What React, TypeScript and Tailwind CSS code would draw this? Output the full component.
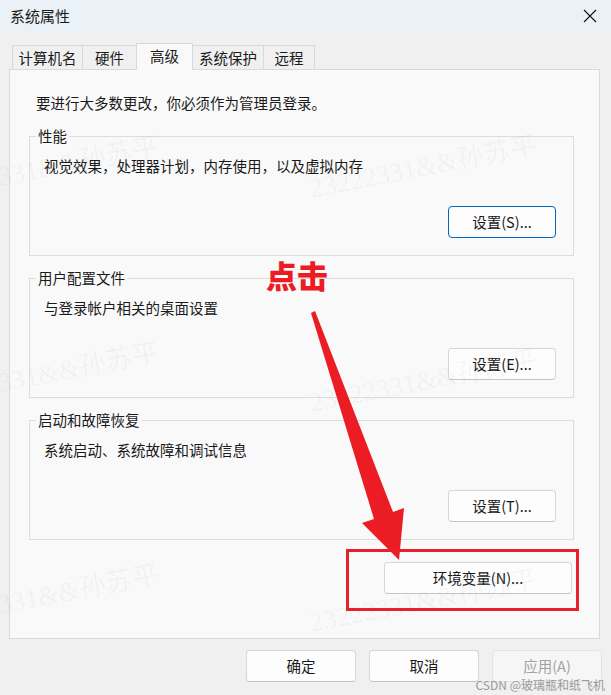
import clsx from "clsx";
import type { ReactNode } from "react";

const tabs = [
  { label: "计算机名", width: "w-[71px]" },
  { label: "硬件", width: "w-[55px]" },
  { label: "高级", width: "w-[57px]", active: true },
  { label: "系统保护", width: "w-[72px]" },
  { label: "远程", width: "w-[52px]" },
];

function WinButton({
  children,
  className,
  primary = false,
  disabled = false,
}: {
  children: ReactNode;
  className?: string;
  primary?: boolean;
  disabled?: boolean;
}) {
  return (
    <button
      className={clsx(
        "h-[32px] rounded-[4px] border text-[14.5px] leading-[20px]",
        primary && "border-[#0067c0] bg-[#fdfdfd]",
        !primary && !disabled && "border-[#d6d6d6] border-b-[#c4c4c4] bg-[#fdfdfd]",
        disabled && "border-[#e3e3e3] bg-[#f6f6f6] text-[#a2a2a2]",
        className
      )}>
      {children}
    </button>
  );
}

function Group({
  title,
  desc,
  button,
  primary,
  className,
  descTop = "pt-[11px]",
}: {
  title: string;
  desc: string;
  button: string;
  primary?: boolean;
  className?: string;
  descTop?: string;
}) {
  return (
    <fieldset className={clsx("border border-[#dcdcdc]", className)}>
      <legend className="ml-[6px] px-[2px] leading-[20px]">{title}</legend>
      <div className={clsx("flex flex-col pl-[14px] pr-[17px] pb-[17px]", descTop)}>
        <p className="leading-[20px]">{desc}</p>
        <div className="mt-[30px] flex justify-end">
          <WinButton primary={primary} className="w-[108px]">
            {button}
          </WinButton>
        </div>
      </div>
    </fieldset>
  );
}

export default function App() {
  return (
    <div className="relative h-[695px] w-[611px] overflow-hidden bg-[#f0f0f0] font-['Noto_Sans_CJK_SC','Microsoft_YaHei',sans-serif] text-[14.5px] text-[#1a1a1a]">
      {/* title bar */}
      <div className="flex h-[32px] items-center justify-between bg-[#eaf2f7] pl-[10px] pr-[14px]">
        <span className="text-[15px] leading-[20px]">系统属性</span>
        <svg width="14" height="14" viewBox="0 0 14 14" className="mt-[-1px]">
          <path d="M1 1 L13 13 M13 1 L1 13" stroke="#111" strokeWidth="1.1" />
        </svg>
      </div>

      {/* tabs */}
      <div className="relative z-10 mt-[11px] flex items-end pl-[12px]">
        {tabs.map((t, i) => (
          <div
            key={t.label}
            className={clsx(
              "flex items-center justify-center border border-b-0 border-[#d9d9d9] leading-[20px]",
              t.width,
              i > 0 && "-ml-px",
              t.active ? "relative z-10 -mb-px h-[27px] bg-[#f9f9f9] pb-[2px]" : "h-[24px] bg-[#f0f0f0]"
            )}>
            {t.label}
          </div>
        ))}
      </div>

      {/* panel */}
      <div className="ml-[9px] h-[570px] w-[591px] border border-[#dadada] bg-[#f9f9f9] pl-[19px] pr-[25px] pt-[23px]">
        <p className="pl-[7px] leading-[20px]">要进行大多数更改，你必须作为管理员登录。</p>
        <Group
          className="mt-[13px]"
          title="性能"
          desc="视觉效果，处理器计划，内存使用，以及虚拟内存"
          button="设置(S)..."
          primary
          descTop="pt-[10px]"
        />
        <Group
          className="mt-[12px]"
          title="用户配置文件"
          desc="与登录帐户相关的桌面设置"
          button="设置(E)..."
          descTop="pt-[10px]"
        />
        <Group
          className="mt-[12px]"
          title="启动和故障恢复"
          desc="系统启动、系统故障和调试信息"
          button="设置(T)..."
          descTop="pt-[10px]"
        />
        <div className="mt-[22px] flex justify-end pr-[2px]">
          <WinButton className="w-[188px]">环境变量(N)...</WinButton>
        </div>
      </div>

      {/* dialog buttons */}
      <div className="mt-[11px] flex justify-end gap-[13px] pr-[9px]">
        <WinButton className="w-[110px]">确定</WinButton>
        <WinButton className="w-[110px]">取消</WinButton>
        <WinButton className="w-[110px]" disabled>
          应用(A)
        </WinButton>
      </div>

      {/* watermark */}
      <div className="pointer-events-none absolute inset-0 font-['Liberation_Serif','Noto_Sans_CJK_SC',serif] text-[27px] leading-none text-black/[0.045]">
        <span className="absolute left-[-68px] top-[177px] origin-left -rotate-[11deg] whitespace-nowrap">23222331&&孙苏平</span>
        <span className="absolute left-[310px] top-[176px] origin-left -rotate-[11deg] whitespace-nowrap">23222331&&孙苏平</span>
        <span className="absolute left-[-68px] top-[383px] origin-left -rotate-[11deg] whitespace-nowrap">23222331&&孙苏平</span>
        <span className="absolute left-[310px] top-[390px] origin-left -rotate-[11deg] whitespace-nowrap">23222331&&孙苏平</span>
        <span className="absolute left-[-68px] top-[605px] origin-left -rotate-[11deg] whitespace-nowrap">23222331&&孙苏平</span>
        <span className="absolute left-[310px] top-[610px] origin-left -rotate-[11deg] whitespace-nowrap">23222331&&孙苏平</span>
      </div>

      {/* annotation */}
      <span className="absolute left-[266px] top-[259px] text-[31px] font-black leading-none text-[#ec1c24]">点击</span>
      <svg className="pointer-events-none absolute left-0 top-0" width="611" height="695">
        <polygon
          points="311,313 315,311 393,512 404,508 399,560 362,523 374,519"
          fill="#ec1c24"
        />
      </svg>
      <div className="pointer-events-none absolute left-[346px] top-[549px] h-[62px] w-[233px] border-[3px] border-[#e8202a]" />

      <span className="absolute bottom-[2px] right-[6px] text-[12px] leading-[16px] text-[#9a9a9a]">CSDN @玻璃瓶和纸飞机</span>
    </div>
  );
}
